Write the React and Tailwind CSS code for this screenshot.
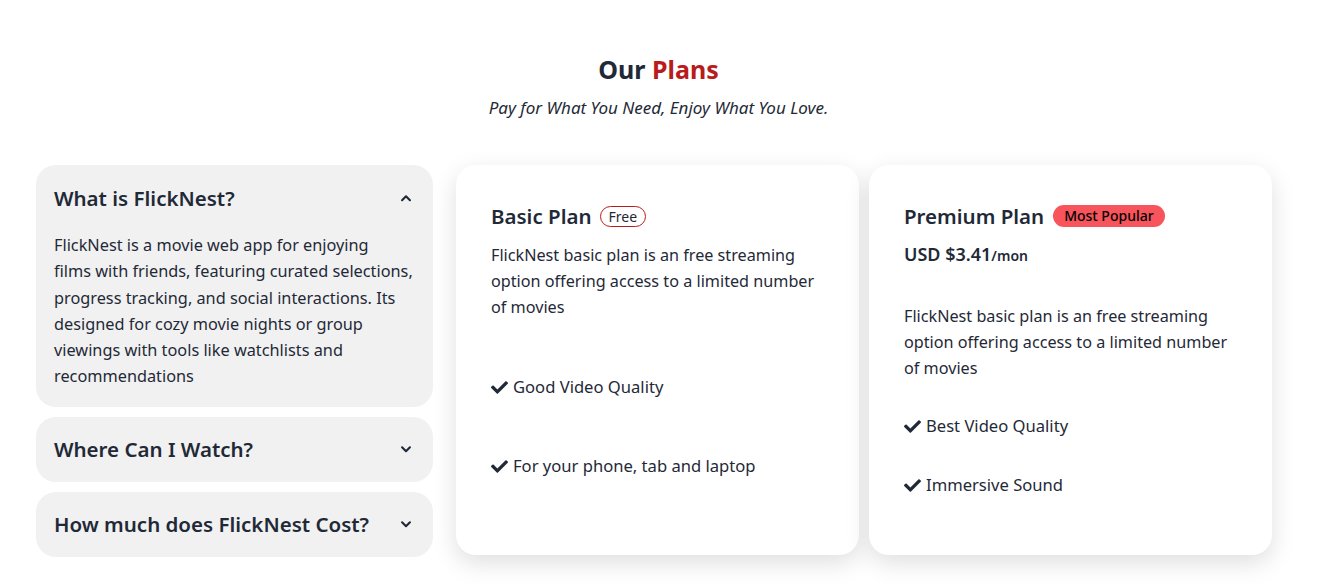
import React from "react";
import { FaCheck } from "react-icons/fa";

const Chevron = ({ up }) => (
  <svg width="14" height="14" viewBox="0 0 16 16" fill="none" stroke="#1f2937" strokeWidth="2.4" strokeLinecap="round" strokeLinejoin="round">
    {up ? <path d="M3.5 10.5 8 6l4.5 4.5" /> : <path d="M3.5 6 8 10.5 12.5 6" />}
  </svg>
);

const Feature = ({ children }) => (
  <div className="flex items-center gap-[5px] text-[16.6px] leading-[26px]">
    <FaCheck className="text-[#1f2937] w-[17px] h-[17px]" />
    <span>{children}</span>
  </div>
);

const Desc = ({ className }) => (
  <p className={"text-[16.2px] leading-[26px] whitespace-nowrap " + className}>
    FlickNest basic plan is an free streaming<br />
    option offering access to a limited number<br />
    of movies
  </p>
);

export default function App() {
  return (
    <div className="bg-white text-[#1f2937] min-h-[587px]" style={{ fontFamily: '"Noto Sans", "Open Sans", sans-serif' }}>
      <div className="pt-[52px] text-center">
        <h2 className="text-[25px] leading-[34px] font-bold">
          Our <span className="text-[#b91c1c]">Plans</span>
        </h2>
        <p className="mt-[10px] italic text-[17px] leading-[24px]">Pay for What You Need, Enjoy What You Love.</p>
      </div>

      <div className="flex items-start pl-[36px] mt-[45px]">
        <div className="w-[397px] flex flex-col gap-[10px]">
          <div className="bg-[#f1f1f1] rounded-[20px] px-[18px] pt-[19px] pb-[17px]">
            <div className="flex items-center justify-between pr-[2px]">
              <span className="text-[20.5px] leading-[28px] font-semibold">What is FlickNest?</span>
              <Chevron up />
            </div>
            <p className="mt-[20px] text-[16.3px] leading-[26.3px]">
              FlickNest is a movie web app for enjoying<br />
              films with friends, featuring curated selections,<br />
              progress tracking, and social interactions. Its<br />
              designed for cozy movie nights or group<br />
              viewings with tools like watchlists and<br />
              recommendations
            </p>
          </div>
          <div className="bg-[#f1f1f1] rounded-[20px] pl-[18px] h-[65px] flex items-center justify-between pr-[20px]">
            <span className="text-[20.5px] leading-[28px] font-semibold">Where Can I Watch?</span>
            <Chevron />
          </div>
          <div className="bg-[#f1f1f1] rounded-[20px] pl-[18px] h-[65px] flex items-center justify-between pr-[20px]">
            <span className="text-[20.5px] leading-[28px] font-semibold">How much does FlickNest Cost?</span>
            <Chevron />
          </div>
        </div>

        <div className="ml-[23px] w-[403px] h-[390px] bg-white rounded-[20px] shadow-[0_8px_24px_rgba(0,0,0,0.13)] px-[35px] pt-[37px]">
          <div className="flex items-center gap-[8px]">
            <span className="text-[20.5px] leading-[28px] font-semibold">Basic Plan</span>
            <span className="border border-[#b91c1c] rounded-full px-[8px] text-[14px] leading-[19px]">Free</span>
          </div>
          <Desc className="mt-[12px]" />
          <div className="mt-[54px] flex flex-col gap-[53px]">
            <Feature>Good Video Quality</Feature>
            <Feature>For your phone, tab and laptop</Feature>
          </div>
        </div>

        <div className="ml-[10px] w-[403px] h-[390px] bg-white rounded-[20px] shadow-[0_8px_24px_rgba(0,0,0,0.13)] px-[35px] pt-[37px]">
          <div className="flex items-center gap-[9px]">
            <span className="text-[20.5px] leading-[28px] font-semibold">Premium Plan</span>
            <span className="bg-[#f7545c] rounded-full px-[11px] text-[14px] leading-[22px] font-medium text-black">Most Popular</span>
          </div>
          <div className="mt-[12px] text-[18px] leading-[24px] font-semibold">
            USD $3.41<span className="text-[14px]">/mon</span>
          </div>
          <Desc className="mt-[35px]" />
          <div className="mt-[32px] flex flex-col gap-[33px]">
            <Feature>Best Video Quality</Feature>
            <Feature>Immersive Sound</Feature>
          </div>
        </div>
      </div>
    </div>
  );
}
